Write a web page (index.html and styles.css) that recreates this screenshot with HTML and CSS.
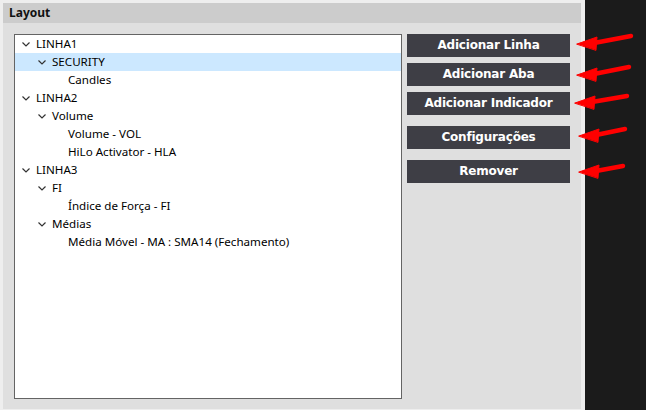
FILE: index.html
```html
<!DOCTYPE html>
<html>
<head>
<meta charset="utf-8">
<link rel="stylesheet" href="styles.css">
</head>
<body>
<div class="screen">
  <div class="left">
    <div class="panel">
      <div class="panel-header">Layout</div>
      <div class="panel-body">
        <div class="tree">
          <div class="row lvl0"><span class="tog"><svg viewBox="0 0 8 5" width="8" height="5"><path d="M0.5 0.5 L4 4 L7.5 0.5" fill="none" stroke="#333" stroke-width="1.2"/></svg></span>LINHA1</div>
          <div class="row lvl1 sel"><span class="tog"><svg viewBox="0 0 8 5" width="8" height="5"><path d="M0.5 0.5 L4 4 L7.5 0.5" fill="none" stroke="#333" stroke-width="1.2"/></svg></span>SECURITY</div>
          <div class="row lvl2"><span class="tog"></span>Candles</div>
          <div class="row lvl0"><span class="tog"><svg viewBox="0 0 8 5" width="8" height="5"><path d="M0.5 0.5 L4 4 L7.5 0.5" fill="none" stroke="#333" stroke-width="1.2"/></svg></span>LINHA2</div>
          <div class="row lvl1"><span class="tog"><svg viewBox="0 0 8 5" width="8" height="5"><path d="M0.5 0.5 L4 4 L7.5 0.5" fill="none" stroke="#333" stroke-width="1.2"/></svg></span>Volume</div>
          <div class="row lvl2"><span class="tog"></span>Volume - VOL</div>
          <div class="row lvl2"><span class="tog"></span>HiLo Activator - HLA</div>
          <div class="row lvl0"><span class="tog"><svg viewBox="0 0 8 5" width="8" height="5"><path d="M0.5 0.5 L4 4 L7.5 0.5" fill="none" stroke="#333" stroke-width="1.2"/></svg></span>LINHA3</div>
          <div class="row lvl1"><span class="tog"><svg viewBox="0 0 8 5" width="8" height="5"><path d="M0.5 0.5 L4 4 L7.5 0.5" fill="none" stroke="#333" stroke-width="1.2"/></svg></span>FI</div>
          <div class="row lvl2"><span class="tog"></span>Índice de Força - FI</div>
          <div class="row lvl1"><span class="tog"><svg viewBox="0 0 8 5" width="8" height="5"><path d="M0.5 0.5 L4 4 L7.5 0.5" fill="none" stroke="#333" stroke-width="1.2"/></svg></span>Médias</div>
          <div class="row lvl2"><span class="tog"></span>Média Móvel - MA : SMA14 (Fechamento)</div>
        </div>
        <div class="buttons">
          <div class="group">
            <button class="btn">Adicionar Linha</button>
            <button class="btn">Adicionar Aba</button>
            <button class="btn">Adicionar Indicador</button>
          </div>
          <button class="btn">Configurações</button>
          <button class="btn">Remover</button>
        </div>
      </div>
    </div>
  </div>
  <div class="dark"></div>
  <svg class="arrows" width="646" height="410" viewBox="0 0 646 410">
    <g fill="#ff0000" stroke="#ff0000" stroke-linecap="round" stroke-linejoin="round">
      <polygon points="577,44 597,37 596,50" stroke-width="1"/>
      <line x1="594" y1="43" x2="631" y2="36" stroke-width="4.5"/>
      <polygon points="577,75 597,68 596,81" stroke-width="1"/>
      <line x1="594" y1="74" x2="629" y2="67" stroke-width="4.5"/>
      <polygon points="575,103 595,96 594,109" stroke-width="1"/>
      <line x1="592" y1="102" x2="627" y2="96" stroke-width="4.5"/>
      <polygon points="579,136 599,129 598,142" stroke-width="1"/>
      <line x1="596" y1="135" x2="625" y2="129" stroke-width="4.5"/>
      <polygon points="579,172 599,165 598,178" stroke-width="1"/>
      <line x1="596" y1="171" x2="623" y2="166" stroke-width="4.5"/>
    </g>
  </svg>
</div>
</body>
</html>
```

FILE: styles.css
```css
* { box-sizing: border-box; }
html, body { margin: 0; padding: 0; }
body {
  width: 646px;
  height: 410px;
  overflow: hidden;
  background: #eeeeee;
  font-family: "Noto Sans", "Open Sans", sans-serif;
}
.screen {
  position: relative;
  display: flex;
  width: 646px;
  height: 410px;
}
.left {
  width: 585px;
  padding: 3px 4px 1px 3px;
  background: #eeeeee;
}
.panel {
  width: 578px;
  height: 406px;
  background: #dfdfdf;
  display: flex;
  flex-direction: column;
}
.panel-header {
  height: 20px;
  background: #cccccc;
  font-size: 12px;
  font-weight: bold;
  line-height: 20px;
  padding-left: 6px;
  color: #111;
}
.panel-body {
  display: flex;
  padding: 11px 0 0 11px;
}
.tree {
  width: 388px;
  height: 365px;
  background: #ffffff;
  border: 1px solid #646464;
}
.row {
  height: 18px;
  line-height: 18px;
  font-size: 11.6px;
  color: #000;
  display: flex;
  align-items: center;
  white-space: nowrap;
}
.row.sel { background: #cce8ff; }
.lvl0 { padding-left: 4px; }
.lvl1 { padding-left: 20px; }
.lvl2 { padding-left: 36px; }
.tog {
  width: 17px;
  height: 18px;
  display: flex;
  align-items: center;
  padding-left: 3px;
  flex-shrink: 0;
}
.tog svg { display: block; }
.buttons {
  margin-left: 5px;
  width: 163px;
  display: flex;
  flex-direction: column;
  gap: 11px;
}
.group {
  display: flex;
  flex-direction: column;
  gap: 6px;
}
.btn {
  width: 163px;
  height: 23px;
  background: #3e3e45;
  color: #ffffff;
  border: none;
  padding: 0;
  margin: 0;
  font-family: "DejaVu Sans", Verdana, sans-serif;
  font-weight: bold;
  font-size: 12px;
  letter-spacing: -0.2px;
  line-height: 23px;
  text-align: center;
}
.dark {
  flex: 1;
  background: #1b1b1b;
}
.arrows {
  position: absolute;
  left: 0;
  top: 0;
  pointer-events: none;
}
```
